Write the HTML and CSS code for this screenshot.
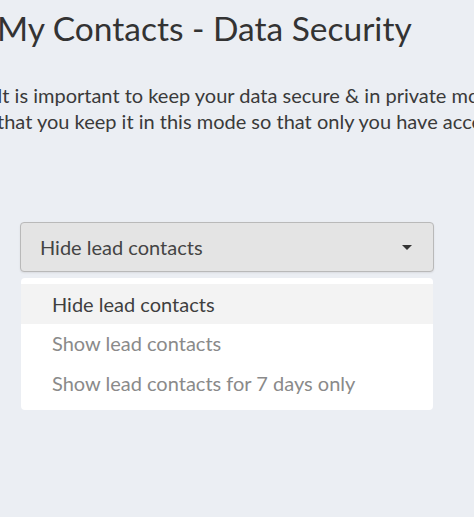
FILE: index.html
```html
<!DOCTYPE html>
<html>
<head>
<meta charset="utf-8">
<link rel="stylesheet" href="styles.css">
</head>
<body>
<div class="page">
  <h1 class="title">My Contacts - Data Security</h1>
  <p class="intro">It is important to keep your data secure &amp; in private mode. We recommend<br>that you keep it in this mode so that only you have access to your lead contacts.</p>
  <div class="field">
    <div class="select">
      <span class="select-value">Hide lead contacts</span>
      <span class="caret"></span>
    </div>
    <ul class="menu">
      <li class="option active">Hide lead contacts</li>
      <li class="option">Show lead contacts</li>
      <li class="option">Show lead contacts for 7 days only</li>
    </ul>
  </div>
</div>
</body>
</html>
```
FILE: styles.css
```css
html, body {
  margin: 0;
  padding: 0;
  background: #ebeef3;
  overflow: hidden;
  height: 100%;
}
body {
  font-family: Lato, "Source Sans Pro", "Open Sans", sans-serif;
  color: #3d3d3d;
}
.page {
  margin-left: -3px;
  padding-top: 7px;
}
.title {
  margin: 0;
  font-weight: 400;
  font-size: 33.5px;
  line-height: 42px;
  color: #333;
  white-space: nowrap;
}
.intro {
  margin: 33px 0 0;
  font-size: 20px;
  line-height: 26px;
  color: #3a3a3a;
  white-space: nowrap;
}
.field {
  margin: 88px 0 0 23px;
  width: 414px;
}
.select {
  box-sizing: border-box;
  height: 50px;
  border: 1px solid #b9b9b9;
  border-radius: 4px;
  background: #e4e4e4;
  display: flex;
  align-items: center;
  justify-content: space-between;
  padding: 0 21px 0 19px;
  box-shadow: 0 1px 2px rgba(0,0,0,0.08);
}
.select-value {
  font-size: 20px;
  color: #444;
}
.caret {
  width: 0;
  height: 0;
  border-left: 5px solid transparent;
  border-right: 5px solid transparent;
  border-top: 5px solid #333;
}
.menu {
  list-style: none;
  margin: 6px 1px 0;
  padding: 6px 0 7px;
  background: #fff;
  border-radius: 4px;
}
.option {
  height: 39.5px;
  display: flex;
  align-items: center;
  padding-left: 31px;
  font-size: 20px;
  color: #8a8a8a;
}
.option.active {
  background: #f3f3f3;
  color: #3f3f3f;
}
```
